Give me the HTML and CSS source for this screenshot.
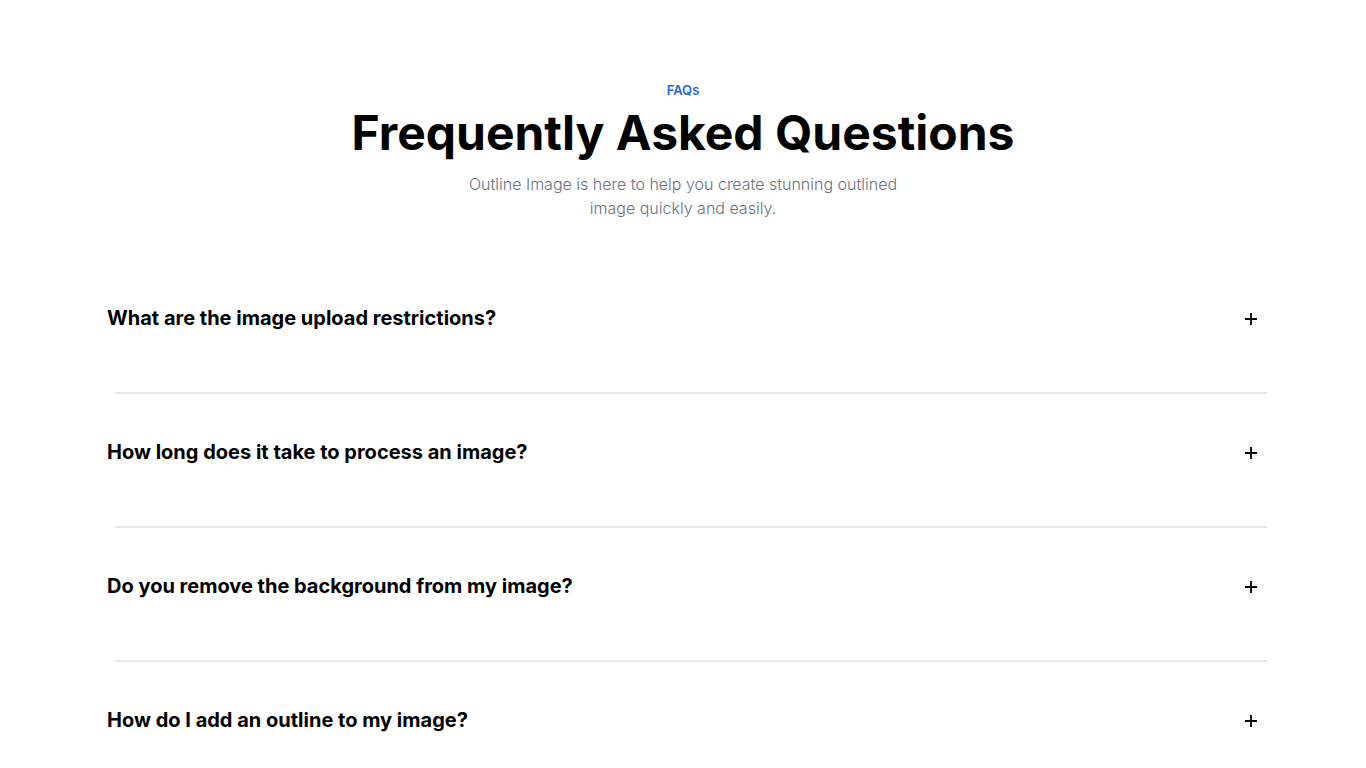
FILE: index.html
```html
<!DOCTYPE html>
<html lang="en">
<head>
    <meta charset="UTF-8">
    <meta name="viewport" content="width=device-width, initial-scale=1.0">
    <title>FAQs</title>
    <link rel="stylesheet" href="styles.css">
</head>
<body>
    <section class="faq">
        <div class="faq-header">
            <p class="faq-eyebrow">FAQs</p>
            <h2 class="faq-title">Frequently Asked Questions</h2>
            <p class="faq-subtitle">Outline Image is here to help you create stunning outlined image quickly and easily.</p>
        </div>

        <div class="faq-list">
            <div class="faq-item">
                <button class="faq-question" type="button">
                    <span>What are the image upload restrictions?</span>
                    <svg class="faq-icon" viewBox="0 0 16 16" aria-hidden="true"><path d="M8 2v12M2 8h12"/></svg>
                </button>
            </div>
            <div class="faq-item">
                <button class="faq-question" type="button">
                    <span>How long does it take to process an image?</span>
                    <svg class="faq-icon" viewBox="0 0 16 16" aria-hidden="true"><path d="M8 2v12M2 8h12"/></svg>
                </button>
            </div>
            <div class="faq-item">
                <button class="faq-question" type="button">
                    <span>Do you remove the background from my image?</span>
                    <svg class="faq-icon" viewBox="0 0 16 16" aria-hidden="true"><path d="M8 2v12M2 8h12"/></svg>
                </button>
            </div>
            <div class="faq-item">
                <button class="faq-question" type="button">
                    <span>How do I add an outline to my image?</span>
                    <svg class="faq-icon" viewBox="0 0 16 16" aria-hidden="true"><path d="M8 2v12M2 8h12"/></svg>
                </button>
            </div>
        </div>
    </section>
</body>
</html>
```

FILE: styles.css
```css
body {
    margin: 0;
    font-family: Inter, "Liberation Sans", Arial, sans-serif;
    background: #ffffff;
    color: #000000;
}

.faq {
    max-width: 1152px;
    margin: 0 auto;
    padding-top: 80px;
}

.faq-header {
    text-align: center;
}

.faq-eyebrow {
    margin: 0;
    font-size: 13px;
    line-height: 20px;
    font-weight: 600;
    color: #2563eb;
}

.faq-title {
    margin: 5px 0 0;
    font-size: 48px;
    line-height: 56px;
    font-weight: 700;
}

.faq-subtitle {
    max-width: 440px;
    margin: 11px auto 0;
    font-size: 16px;
    line-height: 24px;
    font-weight: 300;
    color: #6b7280;
}

.faq-list {
    margin-top: 40px;
}

.faq-item {
    padding: 44px 0 61px;
}

.faq-item + .faq-item {
    position: relative;
    margin-top: 1px;
}

.faq-item + .faq-item::before {
    content: "";
    position: absolute;
    top: -2px;
    left: 8px;
    right: -8px;
    height: 2px;
    background: #e5e7eb;
}

.faq-question {
    display: flex;
    justify-content: space-between;
    align-items: center;
    width: 100%;
    padding: 0;
    border: none;
    background: none;
    font-family: inherit;
    font-size: 20px;
    line-height: 28px;
    font-weight: 700;
    color: #000000;
    text-align: left;
    cursor: pointer;
}

.faq-icon {
    width: 16px;
    height: 16px;
    margin-top: 2px;
    fill: none;
    stroke: #000000;
    stroke-width: 1.8;
}
```
